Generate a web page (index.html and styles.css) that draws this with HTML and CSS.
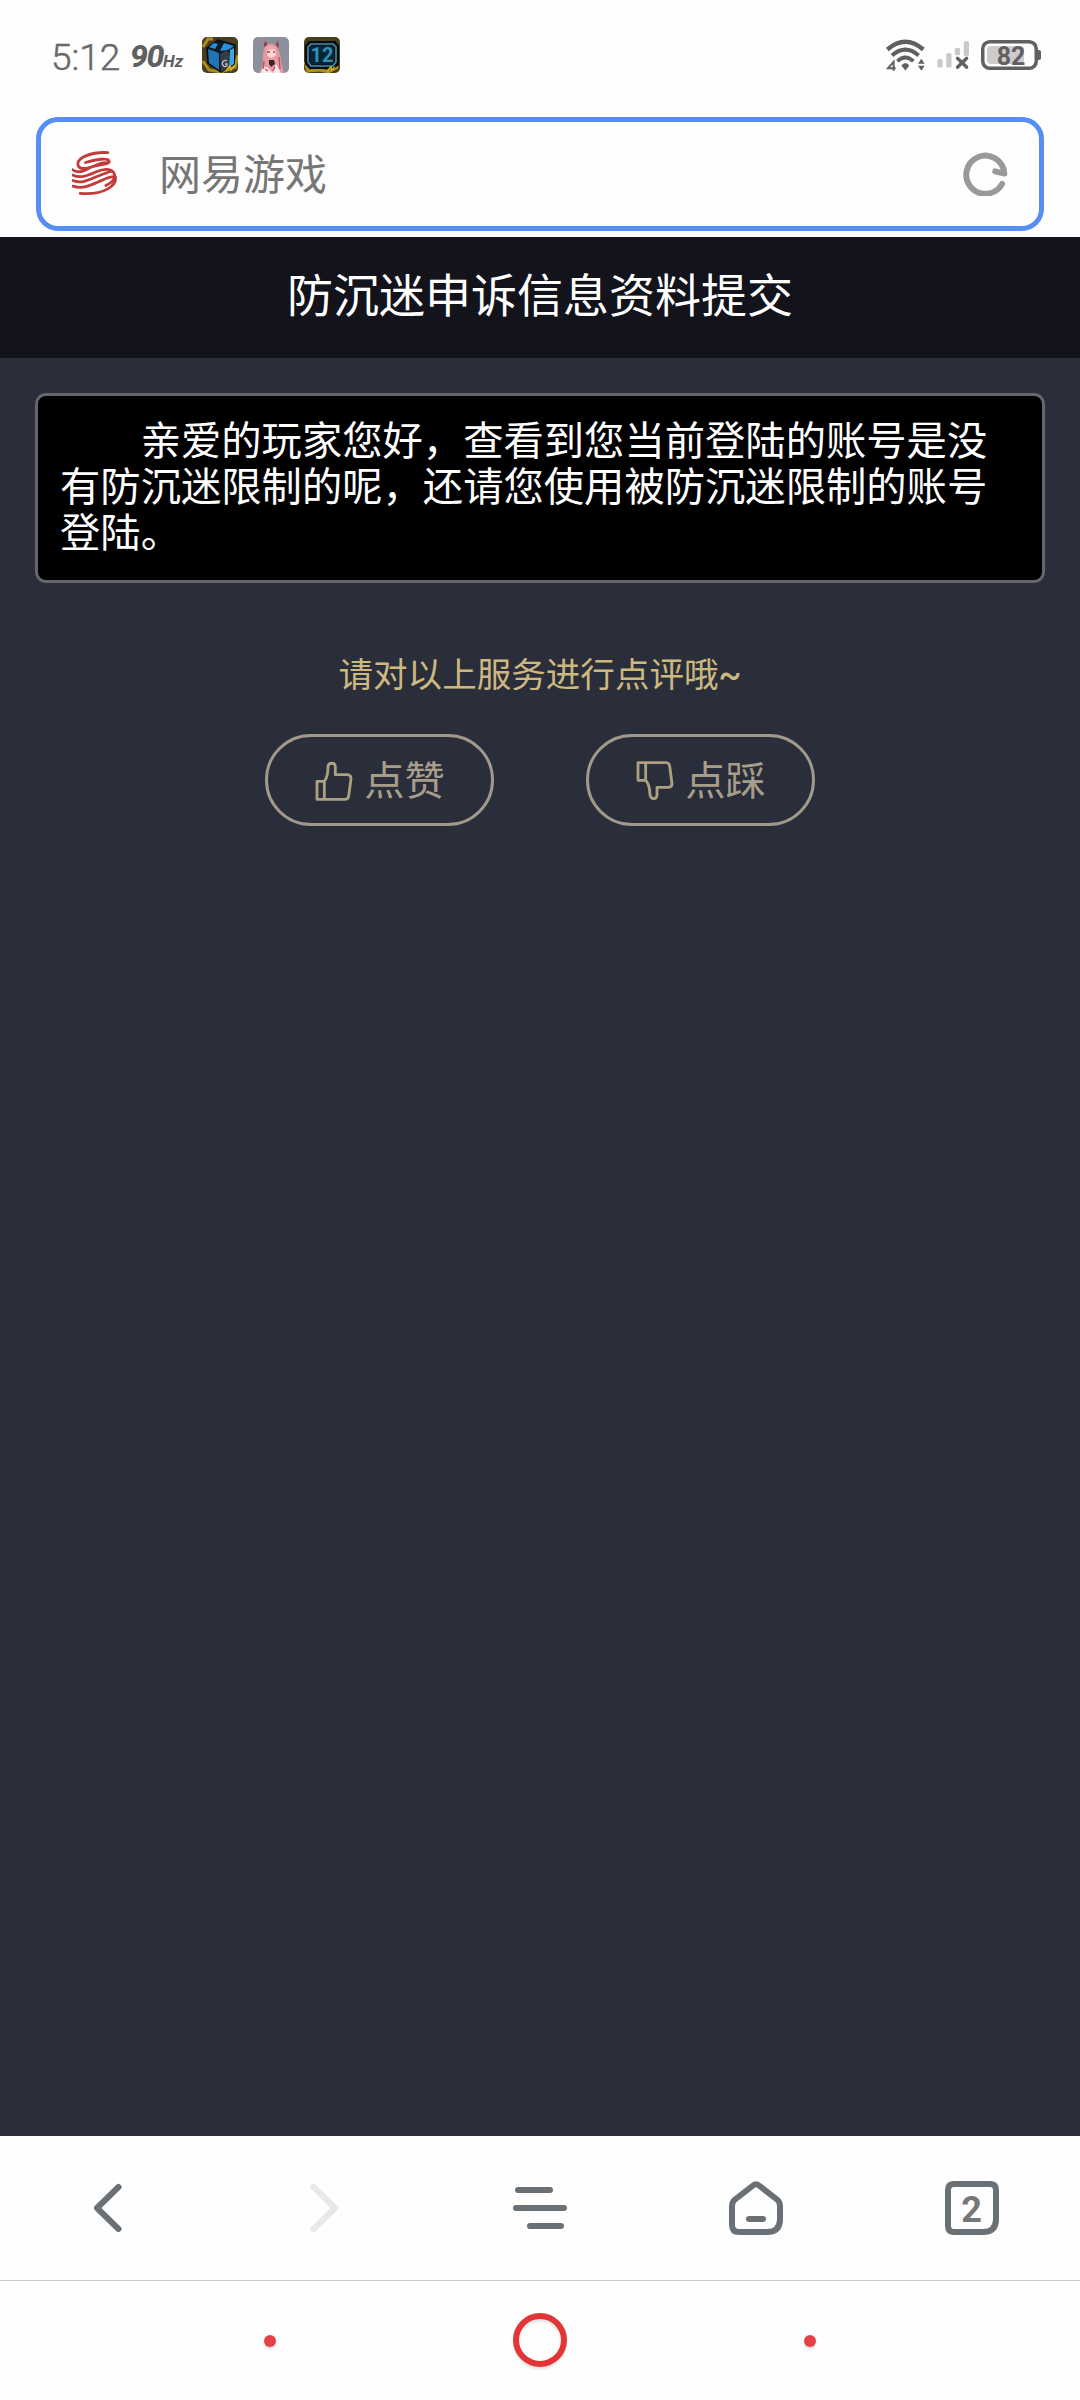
FILE: index.html
```html
<!DOCTYPE html>
<html lang="zh-CN">
<head>
<meta charset="utf-8">
<title>防沉迷申诉信息资料提交</title>
<link rel="stylesheet" href="styles.css">
</head>
<body>
<div class="status">
  <span class="time">5:12</span>
  <span class="rate">90</span><span class="hz">Hz</span>
  <div class="apps">
    <svg class="app" viewBox="0 0 36 36">
      <rect width="36" height="36" rx="5" fill="#4a3d22"/>
      <path d="M1 10 6 2h5M1 24l6 9 12 2 14-5 3-12" fill="none" stroke="#a98f1e" stroke-width="3"/>
      <path d="M5 11 16 3l17 5-1 19-13 8L6 26z" fill="#0d1a28" stroke="#080e16" stroke-width="1.5"/>
      <path d="M6 12l11 4v17L7 26z" fill="#1f74b4"/>
      <path d="M7 10l5-4 4 1-3 5zM22 6l10 3-6 4-8 1z" fill="#288fdb"/>
      <path d="M28 13l4-2v16l-5 3z" fill="#38a6e6"/>
      <path d="M18 17l6-4 3 3v15l-8 4z" fill="#3a3c44"/>
      <path d="M25 24a3 3 0 1 0 0 5v-2h-2" fill="none" stroke="#b9b9b9" stroke-width="1.3"/>
      <path d="M24 34l4-5 1 4 4-5" fill="none" stroke="#d5b21f" stroke-width="1.5"/>
    </svg>
    <svg class="app" viewBox="0 0 36 36">
      <rect width="36" height="36" rx="5" fill="#8d8f9c"/>
      <path d="M12 10q6-7 12 0 4 7 4 15l3 11H6q5-8 4-17 0-6 2-9z" fill="#e69aa0"/>
      <path d="M11 10q-1-4 2-6l1 4zM23 8l1-4q3 2 1 7z" fill="#a03742"/>
      <path d="M14 11q4-3 8 0l1 7q-5 6-9 0z" fill="#f9d8d2"/>
      <path d="M12 15q3-7 7-6 4 0 5 7l-3-4-5 1z" fill="#f3a7a8"/>
      <path d="M14 15h3M20 15h2" stroke="#a04550" stroke-width="1.3"/>
      <path d="M16 23l5 0 1 4-4 3-2-3z" fill="#3d2129"/>
      <path d="M8 36q1-7 6-6l6 6zM20 36l3-9 5 9z" fill="#f7eaea"/>
      <path d="M11 24l-1 8M26 20l1 12M12 32l3 2M22 30l-2 4" stroke="#bd4e5b" stroke-width="1.3"/>
    </svg>
    <svg class="app" viewBox="0 0 36 36">
      <rect width="36" height="36" rx="5" fill="#4a3f1c"/>
      <path d="M1 25l3 9 13-1 7 2 10-5" fill="none" stroke="#a99618" stroke-width="3"/>
      <path d="M5 5h26l3 4v18l-4 4H6l-4-4V9z" fill="#071522" stroke="#080b10" stroke-width="2"/>
      <path d="M7 7h22l3 3v15l-3 4H7l-3-4V10z" fill="none" stroke="#4c8aa5" stroke-width="1.6"/>
      <rect x="6" y="9" width="24" height="18" fill="#082434"/>
      <text class="app-num" x="18" y="25" text-anchor="middle">12</text>
      <path d="M23 34l4-4 1 3 3-3" fill="none" stroke="#d5b21f" stroke-width="1.5"/>
    </svg>
  </div>
  <div class="signals">
    <svg class="wifi" viewBox="48 58 120 98" fill="none" stroke="#606060">
      <path d="M52 89Q106 42 160 89" stroke-width="13"/>
      <path d="M66 107Q106 72 146 107" stroke-width="12"/>
      <path d="M82 124Q106 102 130 124" stroke-width="11"/>
      <path d="M94 137q12-15 24 0l-12 15z" fill="#606060" stroke="none"/>
      <path d="M154 117l10 15h-20zM144 138h20l-10 15z" fill="#606060" stroke="none"/>
      <path d="M71 153v-27L54 145h23" stroke-width="6"/>
    </svg>
    <svg class="cell" viewBox="200 60 100 90">
      <g fill="#c9c9c9"><rect x="201" y="117" width="16" height="26" rx="5"/><rect x="228" y="99" width="16" height="44" rx="5"/><rect x="254" y="83" width="16" height="23" rx="5"/><rect x="281" y="63" width="16" height="45" rx="5"/></g>
      <path d="M262 115l28 27M290 115l-28 27" stroke="#606060" stroke-width="10" stroke-linecap="round"/>
    </svg>
    <svg class="battery" viewBox="0 0 61 30">
      <rect x="1.75" y="1.75" width="53.5" height="26.5" rx="7" fill="none" stroke="#606060" stroke-width="3.5"/>
      <rect x="6" y="6" width="37" height="18" rx="4" fill="#ccc"/>
      <path d="M56 10h2q2 0 2 2v6q0 2-2 2h-2z" fill="#606060"/>
      <text class="level" x="30" y="24.5" text-anchor="middle">82</text>
    </svg>
  </div>
</div>
<div class="address">
  <svg class="logo" viewBox="155 152 137 137" fill="none" stroke="#c23a3a" stroke-width="8.500" stroke-linecap="round">
    <path d="M264 157C215 154 170 172 173 193C176 213 207 205 231 194C256 182 270 193 268 183C266 171 224 178 196 187M268 183C266 197 230 191 205 205C182 218 166 217 157 209"/>
    <path d="M157 225C181 238 208 224 229 215C252 205 275 204 283 220C291 237 277 248 258 257"/>
    <path d="M157 242C185 253 211 238 235 228C256 220 274 212 277 214"/>
    <path d="M158 259C188 270 217 254 242 243C262 234 279 228 287 231C292 255 256 287 180 281"/>
  </svg>
  <span class="site">网易游戏</span>
  <svg class="reload" viewBox="188 152 137 137" fill="none" stroke="#999" stroke-width="18" stroke-linecap="round" stroke-linejoin="round">
    <path d="M307 252A58 58 0 1 1 314 221L286 214"/>
  </svg>
</div>
<div class="title">防沉迷申诉信息资料提交</div>
<div class="page">
  <p class="message">亲爱的玩家您好，查看到您当前登陆的账号是没有防沉迷限制的呢，还请您使用被防沉迷限制的账号登陆。</p>
  <p class="prompt">请对以上服务进行点评哦<span class="tilde">~</span></p>
  <div class="votes">
    <div class="vote">
      <svg class="thumb" viewBox="168 109 108 114"><path d="M171 167h22v54h-22zM193 167Q204 153 204 123C205 110 225 109 226 122V147H263Q273 149 273 159L266 212Q264 221 254 221H193"/></svg>
      <span class="label">点赞</span>
    </div>
    <div class="vote">
      <svg class="thumb" viewBox="168 109 108 114"><path d="M171 111h23v53h-23zM194 164Q206 177 207 208C210 222 227 223 228 208V185H263Q273 184 273 174L266 121Q264 111 256 111H194"/></svg>
      <span class="label">点踩</span>
    </div>
  </div>
</div>
<div class="toolbar">
  <svg class="tool" viewBox="0 0 54 54"><path d="M37.500 6 16 27l21.500 21"/></svg>
  <svg class="tool off" viewBox="0 0 54 54"><path d="M16.500 6 38 27 16.500 48"/></svg>
  <svg class="tool" viewBox="0 0 54 54"><path d="M5 9h32M3 27h48M17 45h31"/></svg>
  <svg class="tool" viewBox="0 0 54 54"><path d="M24 4.500Q27 2 30 4.500L48 18.500Q51 21 51 25V38Q51 51 38 51H10Q3 51 3 44V25Q3 21 6 18.500zM20 38h14"/></svg>
  <svg class="tool" viewBox="0 0 54 54"><path d="M9 3h36q6 0 6 6v29q0 13-13 13H9q-6 0-6-6V9q0-6 6-6z"/><text class="count" x="26.500" y="41" text-anchor="middle">2</text></svg>
</div>
<div class="nav"><i class="dot"></i><i class="ring"></i><i class="dot"></i></div>
</body>
</html>
```
FILE: styles.css
```css
* { box-sizing: border-box; }
body {
  margin: 0;
  width: 1080px;
  height: 2400px;
  display: flex;
  flex-direction: column;
  overflow: hidden;
  background: #fefefe;
  font-family: Roboto, "Noto Sans CJK SC", sans-serif;
}
svg { display: block; flex: none; }
.status {
  height: 117px;
  padding: 37px 38px 0 51px;
  display: flex;
  align-items: flex-start;
  color: #686868;
}
.time { width: 79px; font-size: 37px; line-height: 41px; font-weight: 300; -webkit-text-stroke: .5px #686868; white-space: nowrap; }
.rate { width: 33px; font-size: 32px; line-height: 38px; font-weight: 800; font-style: italic; letter-spacing: -1.5px; color: #606060; }
.hz { width: 39px; font-size: 17px; line-height: 49px; font-weight: 700; font-style: italic; color: #606060; }
.apps { display: flex; gap: 15px; }
.app { width: 36px; height: 36px; }
.app-num { font: 700 20px Roboto, sans-serif; fill: #2d91b8; }
.signals { margin-left: auto; display: flex; align-items: flex-start; padding-top: 3px; }
.wifi { width: 40px; height: 33px; margin: -1px 11px 0 0; }
.cell { width: 33px; height: 30px; margin-right: 11px; }
.battery { width: 61px; height: 30px; }
.level { font: 700 25px Roboto, sans-serif; fill: #606060; }

.address {
  height: 114px;
  margin: 0 36px 6px;
  padding: 0 31px 1px;
  border: 5px solid #578ef4;
  border-radius: 22px;
  display: flex;
  align-items: center;
}
.logo, .reload { width: 45px; height: 45px; }
.site { flex: 1; margin: 0 0 3px 42px; font-size: 42px; line-height: 60px; color: #767676; font-family: "Noto Sans CJK SC", sans-serif; }

.title {
  height: 121px;
  background: #12131b;
  color: #fff;
  text-align: center;
  font: 46px/111px "Noto Sans CJK SC", sans-serif;
}
.page { flex: 1; background: #2a2d3a; padding: 35px 35px 0; font-family: "Noto Sans CJK SC", sans-serif; }
.message {
  margin: 0;
  height: 190px;
  padding: 19px 21px 0 22px;
  border: 3px solid #65666c;
  border-radius: 11px;
  background: #000;
  color: #fff;
  font-size: 40.32px;
  line-height: 46px;
  text-indent: 2em;
}
.prompt { margin: 64px 0 37px; font-size: 34.56px; line-height: 50px; text-align: center; color: #cdb97f; }
.tilde { font-family: Roboto, sans-serif; font-weight: 500; line-height: 1; }
.votes { display: flex; justify-content: center; gap: 92px; }
.vote {
  width: 229px;
  height: 92px;
  padding-left: 2px;
  border: 3px solid #a1998a;
  border-radius: 46px;
  display: flex;
  align-items: center;
  justify-content: center;
  gap: 12px;
  color: #a79e8a;
  font-size: 40.3px;
  line-height: 60px;
}
.label { margin-bottom: 4px; }
.thumb { width: 36px; height: 38px; margin-top: 1px; fill: none; stroke: #aba07f; stroke-width: 8.5; stroke-linejoin: round; overflow: visible; }

.toolbar {
  height: 145px;
  border-bottom: 1px solid #ccc;
  display: grid;
  grid-template-columns: repeat(5, 1fr);
  justify-items: center;
  align-items: center;
}
.tool { width: 54px; height: 54px; fill: none; stroke: #6b7075; stroke-width: 6; stroke-linecap: round; stroke-linejoin: round; }
.off { stroke: #e8e8e8; }
.count { font: 700 36px Roboto, sans-serif; fill: #777; stroke: none; }
.nav { height: 119px; padding-bottom: 1px; display: grid; grid-template-columns: repeat(3, 270px); justify-content: center; justify-items: center; align-items: center; }
.dot { width: 12px; height: 12px; margin-top: 2px; border-radius: 50%; background: #e34146; box-shadow: 0 2px 3px #0002; }
.ring { width: 54px; height: 54px; border: 6px solid #e13538; border-radius: 50%; box-shadow: 0 2px 3px #0002, inset 0 2px 3px #0002; }
```
